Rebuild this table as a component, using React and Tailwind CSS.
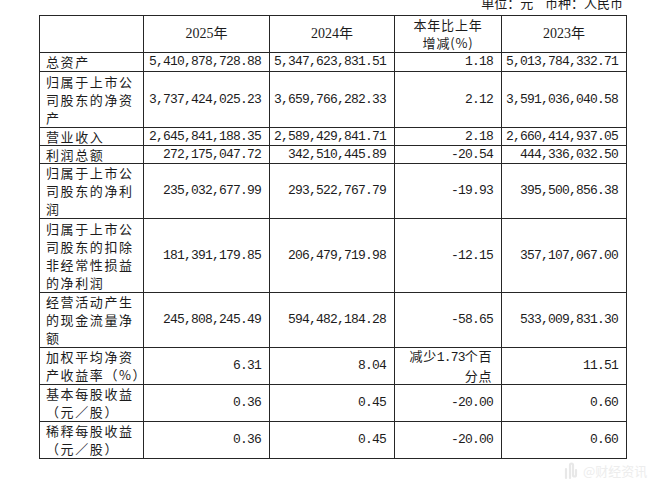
const NUM = "font-['Liberation_Mono','Noto_Sans_CJK_SC',monospace] text-[13px] tracking-[-0.8px]";
const CJK = "font-['Noto_Sans_CJK_SC',sans-serif]";

const rows = [
  { label: ["总资产"], v: ["5,410,878,728.88", "5,347,623,831.51", "1.18", "5,013,784,332.71"] },
  { label: ["归属于上市公", "司股东的净资", "产"], v: ["3,737,424,025.23", "3,659,766,282.33", "2.12", "3,591,036,040.58"] },
  { label: ["营业收入"], v: ["2,645,841,188.35", "2,589,429,841.71", "2.18", "2,660,414,937.05"] },
  { label: ["利润总额"], v: ["272,175,047.72", "342,510,445.89", "-20.54", "444,336,032.50"] },
  { label: ["归属于上市公", "司股东的净利", "润"], v: ["235,032,677.99", "293,522,767.79", "-19.93", "395,500,856.38"] },
  { label: ["归属于上市公", "司股东的扣除", "非经常性损益", "的净利润"], v: ["181,391,179.85", "206,479,719.98", "-12.15", "357,107,067.00"] },
  { label: ["经营活动产生", "的现金流量净", "额"], v: ["245,808,245.49", "594,482,184.28", "-58.65", "533,009,831.30"] },
  { label: ["加权平均净资", "产收益率（%）"], v: ["6.31", "8.04", null, "11.51"] },
  { label: ["基本每股收益", "（元／股）"], v: ["0.36", "0.45", "-20.00", "0.60"] },
  { label: ["稀释每股收益", "（元／股）"], v: ["0.36", "0.45", "-20.00", "0.60"] },
];

const cell = "border-r border-b border-[#262626] flex items-center";

export default function App() {
  return (
    <div className="w-[660px] h-[489px] bg-white overflow-hidden text-[#1c1c1c] relative">
      {/* unit line, cropped at top */}
      <div className={`-mt-[10px] h-[25px] leading-[25px] w-[626px] text-right pr-[3px] text-[13px] ${CJK}`}>
        单位：元&nbsp;&nbsp;&nbsp;&nbsp;币种：人民币
      </div>

      {/* table */}
      <div className="ml-[39px] w-[588px] grid grid-cols-[104px_126px_125px_107px_125px] grid-rows-[37px_19px_56px_18px_18px_55px_74px_55px_37px_37px_37px] border-l border-t border-[#262626] leading-[18px]">
        <div className={cell}></div>
        <div className={`${cell} justify-center text-[14px] font-['Liberation_Serif','Noto_Sans_CJK_SC',serif]`}>2025年</div>
        <div className={`${cell} justify-center text-[14px] font-['Liberation_Serif','Noto_Sans_CJK_SC',serif]`}>2024年</div>
        <div className={`${cell} flex-col justify-center text-[13px] tracking-[0.8px] ${CJK} text-center`}>
          <span>本年比上年</span>
          <span>增减(%)</span>
        </div>
        <div className={`${cell} justify-center text-[14px] font-['Liberation_Serif','Noto_Sans_CJK_SC',serif]`}>2023年</div>

        {rows.map((r, i) => (
          <Row key={i} r={r} />
        ))}
      </div>

      {/* faint watermark */}
      <div className="absolute left-[563px] top-[461px] flex items-center gap-[4px]">
        <svg width="16" height="18" viewBox="0 0 16 18">
          <path d="M3 16V7M7 16V3c0-2 3-2 3 0v10c0 2 3 2 3 0V8" stroke="#e8e8e8" strokeWidth="2.2" fill="none" strokeLinecap="round" />
        </svg>
        <span className={`text-[13px] text-[#ededed] ${CJK}`}>@财经资讯</span>
      </div>
    </div>
  );
}

function Row({ r }) {
  return (
    <>
      <div className={`${cell} pl-[6px] text-[13px] tracking-[1.6px] ${CJK}`}>
        <div className="flex flex-col">
          {r.label.map((l, j) => (
            <span key={j} className="whitespace-nowrap">{l}</span>
          ))}
        </div>
      </div>
      {r.v.map((v, j) =>
        v === null ? (
          <div key={j} className={`${cell} flex-col items-end justify-center pr-[9px] text-[13px] tracking-[0.6px] ${CJK}`}>
            <span className="whitespace-nowrap">
              减少<span className={NUM}>1.73</span>个百
            </span>
            <span>分点</span>
          </div>
        ) : (
          <div key={j} className={`${cell} justify-end pr-[8px] ${NUM}`}>
            {v}
          </div>
        )
      )}
    </>
  );
}
